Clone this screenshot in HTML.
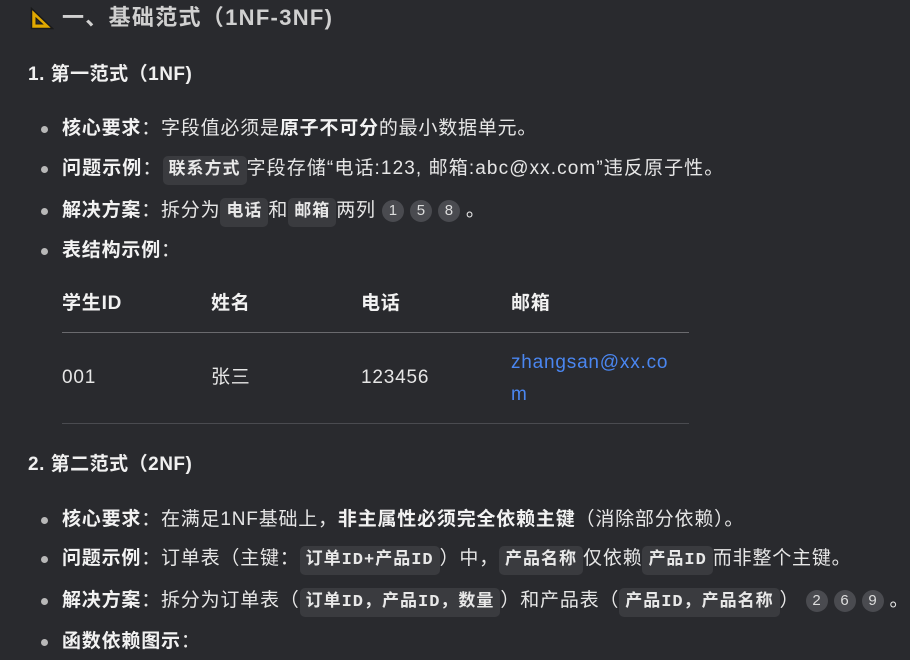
<!DOCTYPE html>
<html><head><meta charset="utf-8"><style>
html,body{margin:0;padding:0}
body{width:910px;height:660px;background:#292a2e;color:#e6e6e6;font-family:"Liberation Sans","Noto Sans CJK SC",sans-serif;font-size:19px;letter-spacing:0.8px;position:relative;overflow:hidden}
.a{position:absolute;white-space:nowrap;line-height:24px}
b{font-weight:bold;color:#f2f2f2}
.h2{font-size:22px;font-weight:bold;color:#d0d0d0;letter-spacing:1.3px}
.h3{font-size:19px;font-weight:bold;color:#f0f0f0;letter-spacing:0.5px}
.dot{position:absolute;width:7px;height:7px;border-radius:50%;background:#b8b8b8}
code{font-family:"Liberation Mono","Noto Sans CJK SC",monospace;font-size:17px;letter-spacing:1px;background:#3a3b3f;border-radius:5px;padding:5px 6px;font-weight:bold;color:#e8e8e8}
.n{display:inline-block;width:22px;height:22px;border-radius:11px;background:#4a4b50;color:#ddd;font-size:15px;letter-spacing:0;text-align:center;line-height:22px;margin-right:6px;vertical-align:middle}
.line{position:absolute;left:62px;width:627px;height:1px;background:#6a6a6e}
.link{color:#4a86f0}
</style></head><body>
<svg style="position:absolute;left:30px;top:7px" width="24" height="23" viewBox="0 0 24 23"><path d="M1.5 1.5 L1.5 21.5 L22.5 21.5 Z" fill="#e0a800" stroke="#1a1a1a" stroke-width="1.5"/><path d="M6 11 L6 17 L12.5 17 Z" fill="#292a2e" stroke="#1a1a1a" stroke-width="1"/></svg>
<div class="a h2" style="left:62px;top:6px">一、基础范式（1NF-3NF)</div>
<div class="a h3" style="left:28px;top:63px">1. 第一范式（1NF)</div>

<div class="dot" style="left:41px;top:126px"></div>
<div class="a" style="left:62px;top:117px"><b>核心要求</b>：字段值必须是<b>原子不可分</b>的最小数据单元。</div>
<div class="dot" style="left:41px;top:166px"></div>
<div class="a" style="left:62px;top:157px;letter-spacing:1.1px"><b>问题示例</b>：<code>联系方式</code>字段存储“电话:123, 邮箱:abc@xx.com”违反原子性。</div>
<div class="dot" style="left:41px;top:208px"></div>
<div class="a" style="left:62px;top:199px"><b>解决方案</b>：拆分为<code>电话</code>和<code>邮箱</code>两列 <span class="n">1</span><span class="n">5</span><span class="n">8</span>。</div>
<div class="dot" style="left:41px;top:248px"></div>
<div class="a" style="left:62px;top:239px"><b>表结构示例</b>：</div>

<div class="a" style="left:62px;top:292px"><b>学生ID</b></div>
<div class="a" style="left:211px;top:292px"><b>姓名</b></div>
<div class="a" style="left:361px;top:292px"><b>电话</b></div>
<div class="a" style="left:511px;top:292px"><b>邮箱</b></div>
<div class="line" style="top:332px"></div>
<div class="a" style="left:62px;top:366px">001</div>
<div class="a" style="left:211px;top:366px">张三</div>
<div class="a" style="left:361px;top:366px">123456</div>
<div class="a link" style="left:511px;top:347px;line-height:32px">zhangsan@xx.co<br>m</div>
<div class="line" style="top:423px;background:#4a4b50"></div>

<div class="a h3" style="left:28px;top:453px">2. 第二范式（2NF)</div>
<div class="dot" style="left:41px;top:517px"></div>
<div class="a" style="left:62px;top:508px"><b>核心要求</b>：在满足1NF基础上，<b>非主属性必须完全依赖主键</b>（消除部分依赖）。</div>
<div class="dot" style="left:41px;top:556px"></div>
<div class="a" style="left:62px;top:547px"><b>问题示例</b>：订单表（主键：<code>订单ID+产品ID</code>）中，<code>产品名称</code>仅依赖<code>产品ID</code>而非整个主键。</div>
<div class="dot" style="left:41px;top:598px"></div>
<div class="a" style="left:62px;top:589px"><b>解决方案</b>：拆分为订单表（<code>订单ID，产品ID，数量</code>）和产品表（<code>产品ID，产品名称</code>） <span class="n">2</span><span class="n">6</span><span class="n">9</span>。</div>
<div class="dot" style="left:41px;top:639px"></div>
<div class="a" style="left:62px;top:630px"><b>函数依赖图示</b>：</div>
</body></html>
